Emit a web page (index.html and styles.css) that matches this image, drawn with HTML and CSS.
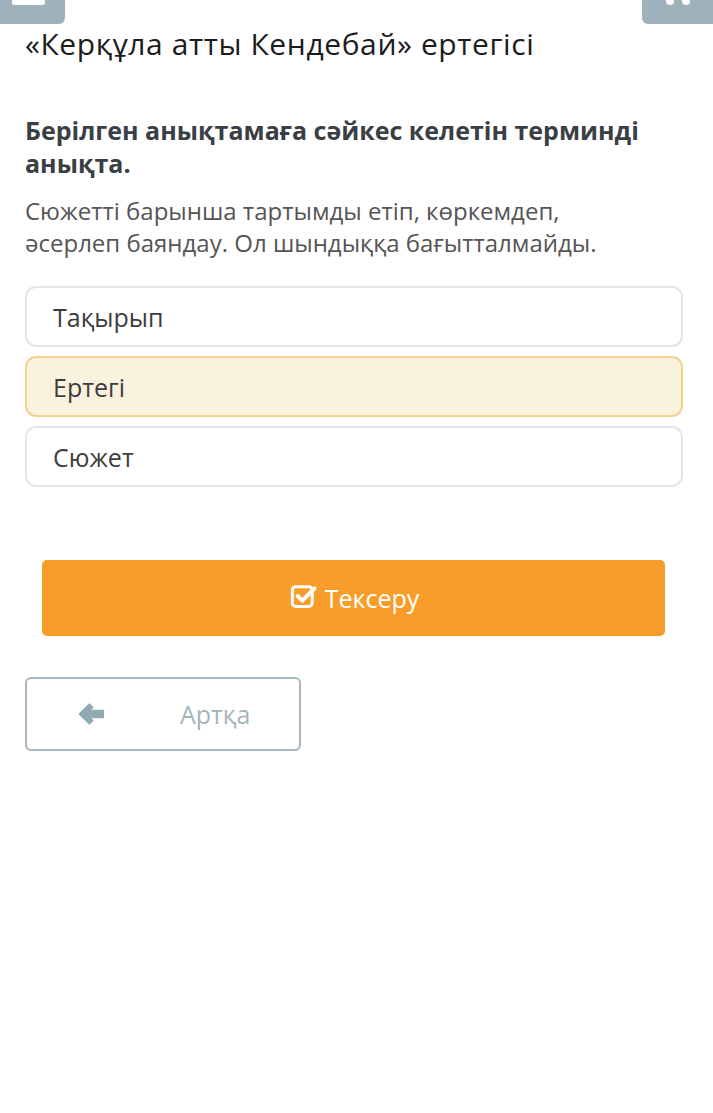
FILE: index.html
```html
<!DOCTYPE html>
<html lang="kk">
<head>
    <meta charset="UTF-8">
    <meta name="viewport" content="width=device-width, initial-scale=1">
    <title>Керқула атты Кендебай</title>
    <link rel="stylesheet" href="styles.css">
</head>
<body>
    <div class="topbar">
        <div class="corner-btn menu-btn"><span class="bar"></span></div>
        <div class="corner-btn close-btn"><span class="x-dot"></span><span class="x-dot"></span></div>
    </div>
    <div class="container">
        <h1 class="title">«Керқұла атты Кендебай» ертегісі</h1>

        <div class="task">
            <p class="question">Берілген анықтамаға сәйкес келетін терминді анықта.</p>
            <p class="statement">Сюжетті барынша тартымды етіп, көркемдеп, әсерлеп баяндау. Ол шындыққа бағытталмайды.</p>
        </div>

        <div class="options">
            <div class="option">Тақырып</div>
            <div class="option selected">Ертегі</div>
            <div class="option">Сюжет</div>
        </div>

        <div class="check-wrap">
            <button class="check-btn">
                <svg class="check-icon" viewBox="0 0 24 24" width="28" height="28">
                    <rect x="2" y="4" width="17" height="17" rx="3" fill="none" stroke="#fff" stroke-width="2.6"/>
                    <path d="M6.5 12 L10.5 16 L21 5.5" fill="none" stroke="#fff" stroke-width="3.4" stroke-linecap="round" stroke-linejoin="round"/>
                </svg>
                Тексеру
            </button>
        </div>

        <button class="back-btn">
            <svg class="back-icon" viewBox="0 0 26 22" width="28" height="24">
                <path d="M11.5 1.5 L2 11 L11.5 20.5 L15 17 L11.5 14.5 L24.5 14.5 L24.5 7.5 L11.5 7.5 L15 5 Z" fill="#8fa9b3" stroke="#8fa9b3" stroke-width="1" stroke-linejoin="round"/>
            </svg>
            <span>Артқа</span>
        </button>
    </div>
</body>
</html>
```

FILE: styles.css
```css
body {
    margin: 0;
    padding: 0;
    background: #fff;
    font-family: 'Open Sans', 'Noto Sans', sans-serif;
    color: #333;
}
.topbar {
    display: flex;
    justify-content: space-between;
    height: 24px;
}
.corner-btn {
    background: #9fb2bb;
    height: 24px;
    position: relative;
}
.menu-btn {
    width: 65px;
    border-bottom-right-radius: 6px;
}
.menu-btn .bar {
    position: absolute;
    left: 12px;
    top: 0;
    width: 33px;
    height: 5px;
    background: #fff;
    border-bottom-left-radius: 2px;
    border-bottom-right-radius: 2px;
}
.close-btn {
    width: 71px;
    border-bottom-left-radius: 6px;
}
.close-btn .x-dot {
    position: absolute;
    top: 0;
    width: 8px;
    height: 5px;
    background: #fff;
    border-radius: 0 0 4px 4px;
}
.close-btn .x-dot:first-child { left: 24px; }
.close-btn .x-dot:last-child { left: 40px; }

.container {
    padding: 0 30px 0 25px;
}
.title {
    font-size: 30px;
    font-weight: 400;
    letter-spacing: 0.6px;
    color: #1c1c1c;
    margin: 0;
    line-height: 40px;
}
.task {
    padding-right: 20px;
}
.question {
    font-size: 25px;
    font-weight: 700;
    color: #3a3f45;
    line-height: 33px;
    margin: 50px 0 0;
}
.statement {
    max-width: 600px;
    font-size: 24px;
    color: #555;
    line-height: 32px;
    margin: 15px 0 0;
}
.options {
    display: flex;
    flex-direction: column;
    gap: 9px;
    margin-top: 27px;
}
.option {
    height: 57px;
    border: 2px solid #e0e7ea;
    border-radius: 11px;
    padding-left: 26px;
    display: flex;
    align-items: center;
    font-size: 25px;
    color: #3d3d3d;
}
.option.selected {
    background: #fbf2de;
    border-color: #f1d38f;
}
.check-wrap {
    padding: 73px 18px 0 17px;
}
.check-btn {
    width: 100%;
    height: 76px;
    border: none;
    border-radius: 5px;
    background: #f89d2a;
    color: #fff;
    font-family: inherit;
    font-size: 25px;
    display: flex;
    align-items: center;
    justify-content: center;
    gap: 7px;
    padding: 0 0 0 2px;
}
.check-icon {
    margin-top: -4px;
}
.back-btn {
    margin-top: 41px;
    width: 276px;
    height: 74px;
    border: 2px solid #a8b7bd;
    border-radius: 6px;
    background: #fff;
    font-family: inherit;
    font-size: 25px;
    color: #a5b4ba;
    display: flex;
    align-items: center;
    padding: 0 0 0 50px;
}
.back-icon {
    margin-right: 75px;
}
```
